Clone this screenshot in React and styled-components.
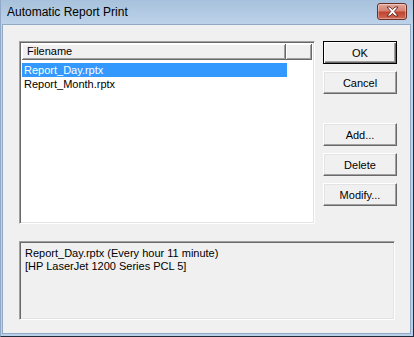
import React, { useState } from "react";
import styled, { createGlobalStyle, css } from "styled-components";

const GlobalStyle = createGlobalStyle`
  html, body {
    margin: 0;
    padding: 0;
    background: #ffffff;
  }
  body {
    font-family: "Liberation Sans", Arial, sans-serif;
  }
`;

const files = ["Report_Day.rptx", "Report_Month.rptx"];

const App = () => {
  const [selected, setSelected] = useState(0);

  return (
    <>
      <GlobalStyle />
      <Window>
        <TitleBar>
          <Title>Automatic Report Print</Title>
          <CloseButton>
            <svg width="15" height="11" viewBox="0 0 15 11">
              <path
                d="M2 1 L5 1 L7.5 3.6 L10 1 L13 1 L9.3 5.5 L13 10 L10 10 L7.5 7.4 L5 10 L2 10 L5.7 5.5 Z"
                fill="#ffffff"
                stroke="#5a2620"
                strokeWidth="0.9"
                strokeLinejoin="round"
              />
            </svg>
          </CloseButton>
        </TitleBar>
        <Client>
          <MainRow>
            <ListView>
              <Header>
                <HeaderCell>Filename</HeaderCell>
                <HeaderFill />
              </Header>
              <Rows>
                {files.map((name, i) => (
                  <Row
                    key={name}
                    active={i === selected}
                    onClick={() => setSelected(i)}
                  >
                    {name}
                  </Row>
                ))}
              </Rows>
            </ListView>
            <ButtonColumn>
              <Button primary>OK</Button>
              <Button>Cancel</Button>
              <Button spaced>Add...</Button>
              <Button>Delete</Button>
              <Button>Modify...</Button>
            </ButtonColumn>
          </MainRow>
          <InfoBox>
            {files[selected]} (Every hour 11 minute)
            <br />
            [HP LaserJet 1200 Series PCL 5]
          </InfoBox>
        </Client>
      </Window>
    </>
  );
};

const Window = styled.div`
  width: 414px;
  height: 337px;
  box-sizing: border-box;
  display: flex;
  flex-direction: column;
  padding: 0 1px 1px 1px;
  border: 1px solid;
  border-color: #8fa9c6 #1f2b3a #1f2b3a #8fa9c6;
  border-top: none;
  background: linear-gradient(#a7c1dc 0px, #bcd2e9 24px, #c2d6eb 26px, #bad0e8 100%);
`;

const TitleBar = styled.div`
  height: 24px;
  flex-shrink: 0;
  display: flex;
  align-items: center;
  justify-content: space-between;
  padding: 0 5px 0 5px;
`;

const Title = styled.div`
  font-family: "Liberation Sans", Arial, sans-serif;
  font-size: 12px;
  color: #000000;
  margin-top: 0;
`;

const CloseButton = styled.div`
  width: 30px;
  height: 17px;
  box-sizing: border-box;
  display: flex;
  align-items: center;
  justify-content: center;
  border: 1px solid #6b2e26;
  border-radius: 3px;
  margin-top: -2px;
  background: linear-gradient(#e3a89d 0%, #d78272 45%, #c2432f 55%, #cf6b55 100%);
  box-shadow: inset 0 0 0 1px rgba(255, 255, 255, 0.35);
`;

const Client = styled.div`
  flex: 1;
  display: flex;
  flex-direction: column;
  background: #f0f0f0;
  border: 1px solid #8fa9c6;
  padding: 16px 12px 10px 16px;
  margin-right: 1px;
  margin-bottom: 1px;
`;

const MainRow = styled.div`
  display: flex;
  gap: 8px;
  height: 183px;
`;

const sunken = css`
  box-sizing: border-box;
  border: 1px solid;
  border-color: #a0a0a0 #ffffff #ffffff #a0a0a0;
  box-shadow: inset 1px 1px 0 #696969, inset -1px -1px 0 #e3e3e3;
`;

const ListView = styled.div`
  ${sunken};
  width: 296px;
  height: 183px;
  background: #ffffff;
  padding: 2px;
  display: flex;
  flex-direction: column;
`;

const Header = styled.div`
  display: flex;
  height: 16px;
  flex-shrink: 0;
`;

const headerCell = css`
  box-sizing: border-box;
  background: #f0f0f0;
  border-right: 1px solid #696969;
  border-bottom: 1px solid #696969;
  box-shadow: inset 1px 1px 0 #ffffff, inset -1px -1px 0 #a0a0a0;
`;

const HeaderCell = styled.div`
  ${headerCell};
  width: 264px;
  font-size: 11px;
  line-height: 15px;
  padding-left: 5px;
  color: #000000;
`;

const HeaderFill = styled.div`
  ${headerCell};
  flex: 1;
`;

const Rows = styled.div`
  padding-top: 3px;
  display: flex;
  flex-direction: column;
`;

const Row = styled.div`
  width: 265px;
  height: 14px;
  line-height: 14px;
  font-size: 11px;
  padding-left: 2px;
  box-sizing: border-box;
  color: #000000;
  cursor: default;
  ${({ active }) =>
    active &&
    css`
      background: #3399ff;
      color: #ffffff;
    `};
`;

const ButtonColumn = styled.div`
  display: flex;
  flex-direction: column;
  gap: 7px;
`;

const Button = styled.div`
  width: 74px;
  height: 23px;
  box-sizing: border-box;
  display: flex;
  align-items: center;
  justify-content: center;
  background: #f0f0f0;
  font-size: 11px;
  color: #000000;
  border: 1px solid;
  border-color: #ffffff #696969 #696969 #ffffff;
  box-shadow: inset -1px -1px 0 #a0a0a0, inset 1px 1px 0 #e3e3e3;

  ${({ primary }) =>
    primary &&
    css`
      border: 1px solid #000000;
      box-shadow: inset 1px 1px 0 #ffffff, inset -1px -1px 0 #696969,
        inset -2px -2px 0 #a0a0a0;
    `};

  ${({ spaced }) =>
    spaced &&
    css`
      margin-top: 22px;
    `};
`;

const InfoBox = styled.div`
  ${sunken};
  width: 376px;
  height: 79px;
  margin-top: 17px;
  background: #f0f0f0;
  padding: 5px 5px;
  font-size: 11px;
  line-height: 13px;
  color: #000000;
`;

export default App;
